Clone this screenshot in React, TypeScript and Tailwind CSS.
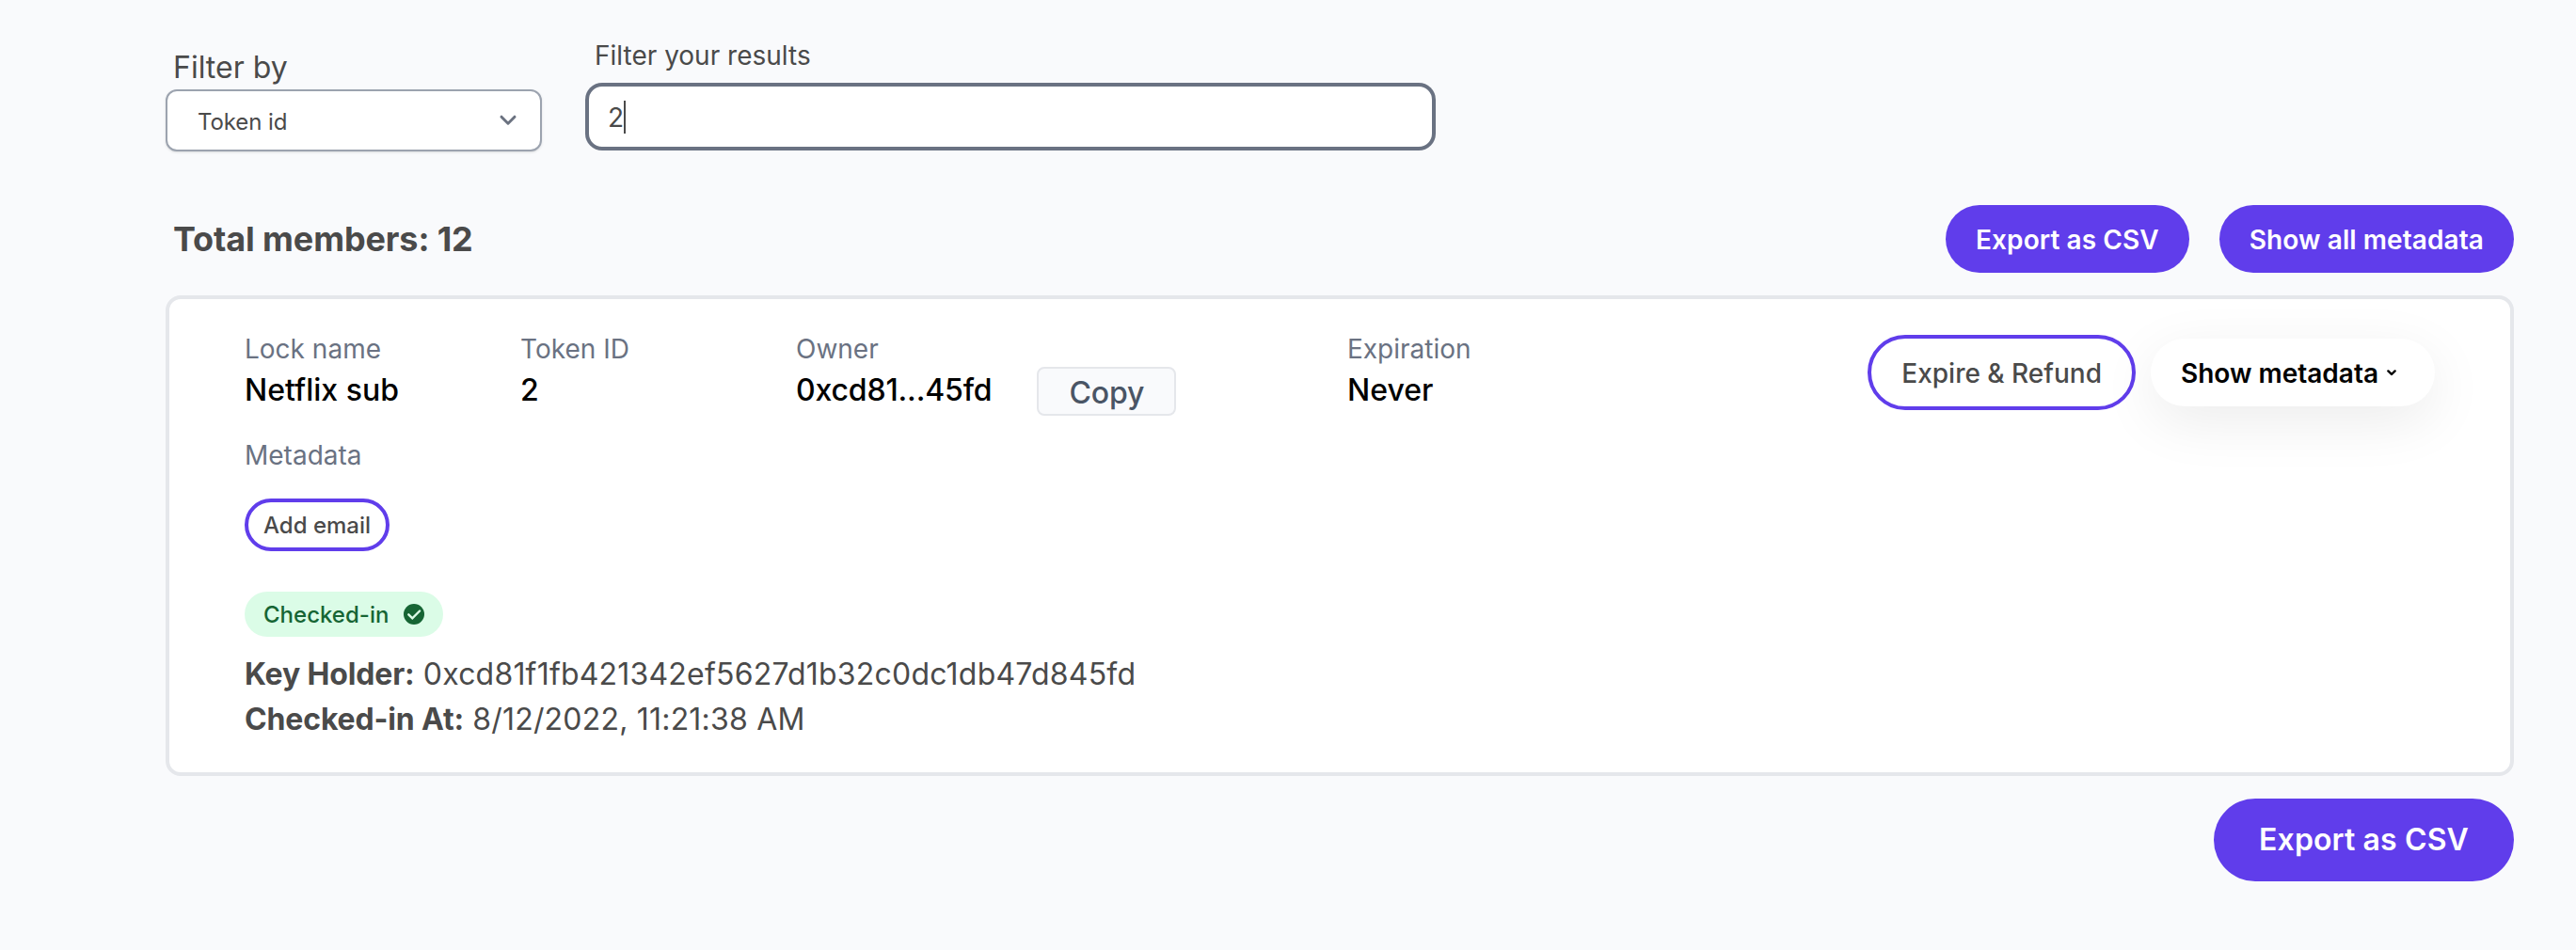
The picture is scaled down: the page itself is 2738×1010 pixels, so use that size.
import type { ReactNode } from "react";

function Field({ label, className, children }: { label: string; className: string; children: ReactNode }) {
  return (
    <div className={className}>
      <div className="text-[28px] leading-10 text-gray-500">{label}</div>
      {children}
    </div>
  );
}

function Value({ children }: { children: ReactNode }) {
  return <div className="text-[32px] leading-12 font-medium text-black">{children}</div>;
}

function Row({ name, value }: { name: string; value: string }) {
  return (
    <div className="text-[32px] leading-12 tracking-[0.2px]">
      <span className="font-bold tracking-[-0.15px]">{name}</span> <span>{value}</span>
    </div>
  );
}

export default function App() {
  return (
    <div className="flex h-[1010px] w-[2738px] flex-col bg-[#f9fafc] pt-[39px] pr-[66px] pl-44 font-['Inter',sans-serif] text-[#4a4a4a]">
      {/* Filters */}
      <div className="flex gap-12">
        <div className="w-[400px] pt-2">
          <label className="block h-12 pt-px pl-2 text-[32px] leading-12">Filter by</label>
          <div className="flex h-[66px] items-center justify-between rounded-xl border-2 border-[#9ca3af] bg-white pr-6 pl-8 shadow-sm">
            <span className="pt-[3px] text-2xl tracking-[-0.1px]">Token id</span>
            <svg className="h-3 w-5" viewBox="0 0 20 12" fill="none" stroke="#6b7280" strokeWidth="3" strokeLinecap="round" strokeLinejoin="round">
              <path d="M3 2.2l7 7 7-7" />
            </svg>
          </div>
        </div>
        <div className="w-[900px]">
          <label className="block pl-2 text-[28px] leading-10">Filter your results</label>
          <div className="mt-[11px] flex h-[68px] items-center rounded-2xl border-2 border-gray-500 bg-white pl-5 ring-2 ring-gray-500">
            <span className="pt-px text-[28px]">2</span>
            <span className="h-[35px] w-0.5 bg-[#4a4a4a]" />
          </div>
        </div>
      </div>

      {/* Summary */}
      <div className="mt-[57px] flex h-[72px] items-center justify-between">
        <h1 className="pl-2 text-[36px] font-bold tracking-[-0.12px]">Total members: 12</h1>
        <div className="flex gap-8">
          <button className="h-[72px] rounded-full bg-[#603deb] px-8 pt-0.5 text-[28px] font-semibold tracking-[0.08px] text-white">Export as CSV</button>
          <button className="h-[72px] rounded-full bg-[#603deb] px-8 pt-0.5 text-[28px] font-semibold tracking-[0.08px] text-white">Show all metadata</button>
        </div>
      </div>

      {/* Member card */}
      <div className="mt-6 h-[511px] rounded-2xl border-4 border-gray-200 bg-white px-20 pt-[33px]">
        <div className="flex h-[113px] items-start justify-between">
          <div className="flex">
            <Field label="Lock name" className="w-[293px]">
              <Value>Netflix sub</Value>
            </Field>
            <Field label="Token ID" className="w-[293px]">
              <Value>2</Value>
            </Field>
            <Field label="Owner" className="w-[586px]">
              <div className="flex gap-12 tracking-[-0.15px]">
                <Value>0xcd81...45fd</Value>
                <button className="-mt-px h-[52px] rounded-lg border-2 border-gray-200 bg-[#f9fafc] px-8 pt-0.5 text-[32px] leading-12 font-medium text-gray-600">Copy</button>
              </div>
            </Field>
            <Field label="Expiration" className="w-[293px]">
              <Value>Never</Value>
            </Field>
          </div>
          <div className="mt-[5px] flex h-20 items-center gap-4">
            <button className="h-20 rounded-full border-4 border-[#603deb] bg-white px-8 pt-0.5 text-[28px] font-medium">Expire &amp; Refund</button>
            <button className="flex h-[72px] items-center rounded-full bg-white px-8 text-[28px] font-semibold text-black shadow-[0_16px_60px_rgba(0,0,0,0.08)]">
              <span className="pt-0.5">Show metadata</span>
              <svg className="size-7" viewBox="0 0 28 28" fill="none" stroke="black" strokeWidth="2.4" strokeLinecap="round" strokeLinejoin="round">
                <path d="M10.4 12.4l3.6 3.6 3.6-3.6" />
              </svg>
            </button>
          </div>
        </div>
        <div className="text-[28px] leading-10 text-gray-500">Metadata</div>
        <button className="mt-[26px] block h-14 rounded-full border-4 border-[#603deb] bg-white px-4 pt-0.5 text-2xl leading-8 font-medium">Add email</button>
        <div className="mt-[43px] flex h-12 w-fit items-center gap-4 rounded-full bg-green-100 px-5 text-2xl font-medium text-[#166534]">
          <span className="pt-px">Checked-in</span>
          <svg className="size-[22px]" viewBox="0 0 22 22">
            <circle cx="11" cy="11" r="11" fill="#166534" />
            <path d="M5.3 11.3l4 4 7.8-7.8" fill="none" stroke="#dcfce7" strokeWidth="2.4" strokeLinecap="round" />
          </svg>
        </div>
        <div className="mt-4">
          <Row name="Key Holder:" value="0xcd81f1fb421342ef5627d1b32c0dc1db47d845fd" />
          <Row name="Checked-in At:" value="8/12/2022, 11:21:38 AM" />
        </div>
      </div>

      <button className="mt-6 h-[88px] self-end rounded-full bg-[#603deb] px-12 text-[32px] font-semibold tracking-[0.12px] text-white">Export as CSV</button>
    </div>
  );
}
